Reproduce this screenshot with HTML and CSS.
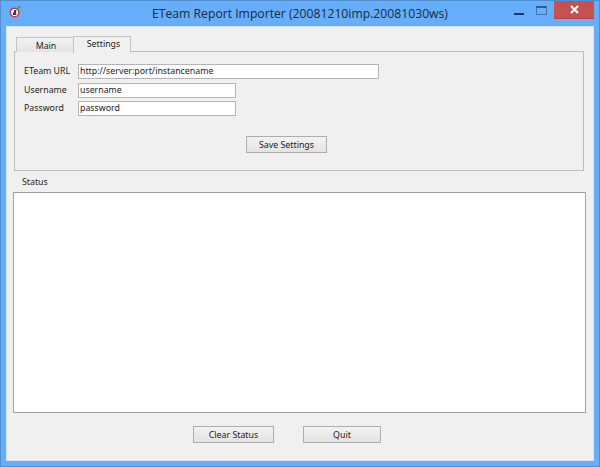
FILE: index.html
```html
<!DOCTYPE html>
<html lang="en">
<head>
<meta charset="utf-8">
<title>ETeam Report Importer</title>
<link rel="stylesheet" href="styles.css">
</head>
<body>
<div class="window">
  <header class="titlebar">
    <svg class="app-icon" width="14" height="14" viewBox="0 0 14 14">
      <circle cx="6.500" cy="7.500" r="4.300" fill="#fff" stroke="#d0343c" stroke-width="1.400"/>
      <path d="M6 5h2.200v5H5V7.500h1z" fill="#24407a"/>
      <path d="M8.500 3.500l1 1 2.500-3.500" fill="none" stroke="#3f9a3a" stroke-width="1.300"/>
    </svg>
    <h1 class="title">ETeam Report Importer (20081210imp.20081030ws)</h1>
    <div class="controls">
      <span class="ctl ctl-min"><i class="min-glyph"></i></span>
      <span class="ctl ctl-max"><i class="max-glyph"></i></span>
      <span class="ctl-close">
        <svg width="9" height="9" viewBox="0 0 9 9"><path d="M1 1l7 7M8 1L1 8" stroke="#fff" stroke-width="2" fill="none"/></svg>
      </span>
    </div>
  </header>
  <main class="client">
    <div class="tabs">
      <span class="tab">Main</span>
      <span class="tab tab-active">Settings</span>
    </div>
    <section class="panel">
      <div class="row row-first">
        <label class="label">ETeam URL</label>
        <input class="field field-wide" value="http://server:port/instancename">
      </div>
      <div class="row">
        <label class="label">Username</label>
        <input class="field" value="username">
      </div>
      <div class="row">
        <label class="label">Password</label>
        <input class="field" value="password">
      </div>
      <div class="save-row"><button class="btn btn-save">Save Settings</button></div>
    </section>
    <div class="status-label">Status</div>
    <textarea class="status"></textarea>
    <div class="actions">
      <button class="btn btn-clear">Clear Status</button>
      <button class="btn btn-quit">Quit</button>
    </div>
  </main>
</div>
</body>
</html>
```

FILE: styles.css
```css
* { box-sizing: border-box; }
html, body { margin: 0; padding: 0; }
body { width: 600px; height: 467px; overflow: hidden; font-family: "Noto Sans", sans-serif; font-size: 8.800px; color: #222; }
.window { width: 600px; height: 467px; background: #66aefa; border: 1px solid #4f8ecf; padding: 0 5px 5px; display: flex; flex-direction: column; }
.titlebar { height: 25px; display: flex; align-items: center; position: relative; flex: none; }
.app-icon { margin-left: 2px; margin-top: -3px; flex: none; }
.title { flex: 1; margin: 0; text-align: center; font-family: "Open Sans", sans-serif; font-weight: 400; font-size: 12.200px; color: #1a2a38; padding-right: 16px; }
.controls { display: flex; position: absolute; right: 0; top: 0; align-items: flex-start; }
.ctl { width: 23px; height: 19px; display: flex; align-items: center; justify-content: center; }
.min-glyph { width: 10px; height: 2px; background: #1f3a5c; margin-top: 6px; }
.max-glyph { width: 11px; height: 9px; border: 1px solid #3d78b4; border-top-width: 2px; border-top-color: #2a5c92; margin-top: -1px; }
.ctl-close { width: 40px; height: 18px; background: #c75050; display: flex; align-items: center; justify-content: center; border-bottom: 1px solid #b04545; margin-left: 1px; }
.client { flex: 1; background: #f0f0f0; border: 1px solid #d6e4f2; padding: 9px 8px 0 6px; display: flex; flex-direction: column; }
.tabs { display: flex; padding-left: 3px; height: 16px; align-items: flex-end; position: relative; z-index: 1; }
.tab { width: 58px; height: 15px; background: linear-gradient(#f2f2f2, #e4e4e4); border: 1px solid #c4c4c4; border-bottom: 0; text-align: center; line-height: 16px; padding-left: 2px; }
.tab-active { width: 58px; height: 17px; background: #f0f0f0; border-left: 1px solid #c4c4c4; margin-left: -1px; line-height: 14px; margin-bottom: -1px; padding-left: 3px; }
.panel { margin-left: 1px; width: 570px; height: 120px; border: 1px solid #bdbdbd; padding: 12px 0 0 9px; flex: none; margin-top: -1px; }
.row { display: flex; align-items: center; height: 14px; margin-bottom: 4px; }
.row-first { margin-bottom: 5px; }
.label { width: 54px; flex: none; }
.field { width: 158px; height: 15px; border: 1px solid #b4b4b4; background: #fff; padding: 0 1px; font: inherit; color: inherit; outline: 0; }
.field-wide { width: 301px; }
.save-row { display: flex; padding-left: 222px; margin-top: 21px; }
.btn { height: 17px; background: linear-gradient(#f2f2f2, #e3e3e3); border: 1px solid #adadad; font: inherit; color: inherit; padding: 0; }
.btn-save { width: 81px; }
.status-label { margin: 5px 0 0 9px; height: 16px; line-height: 12px; flex: none; }
.status { display: block; width: 573px; height: 221px; margin: 0; border: 1px solid #a0a0a0; background: #fff; resize: none; outline: 0; flex: none; }
.actions { display: flex; padding-left: 180px; gap: 29px; margin-top: 13px; }
.btn-clear { width: 81px; }
.btn-quit { width: 78px; }
```
